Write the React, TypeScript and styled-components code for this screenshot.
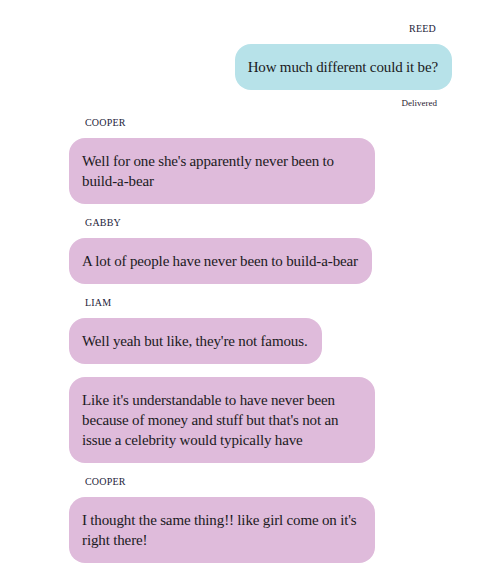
import React from "react";
import styled, { createGlobalStyle } from "styled-components";

const Global = createGlobalStyle`
  html, body { margin: 0; padding: 0; background: #ffffff; }
  body { font-family: "Liberation Serif", "DejaVu Serif", serif; color: #1b1a22; }
`;

const Thread = styled.div`
  display: flex;
  flex-direction: column;
  padding: 23px 28px 8px 69px;
`;

const Label = styled.div<{ $mine?: boolean }>`
  font-size: 10px;
  line-height: 12px;
  text-transform: uppercase;
  letter-spacing: 0.2px;
  color: #1d1c3a;
  margin: 0 16px 9px;
  align-self: ${(p) => (p.$mine ? "flex-end" : "flex-start")};
`;

const Bubble = styled.div<{ $mine?: boolean }>`
  box-sizing: border-box;
  max-width: 306px;
  padding: 13px 14px 13px 13px;
  border-radius: 16px;
  font-size: 15px;
  line-height: 20px;
  letter-spacing: -0.12px;
  word-spacing: -0.2px;
  background: ${(p) => (p.$mine ? "#b7e2e9" : "#dfbbdb")};
  align-self: ${(p) => (p.$mine ? "flex-end" : "flex-start")};
  margin-bottom: 13px;
`;

const Status = styled.div`
  align-self: flex-end;
  font-size: 9px;
  line-height: 11px;
  margin: -5px 15px 8px 0;
  color: #2a2230;
`;

type Msg = { who?: string; text: string; mine?: boolean; status?: string };

const messages: Msg[] = [
  { who: "Reed", text: "How much different could it be?", mine: true, status: "Delivered" },
  { who: "Cooper", text: "Well for one she's apparently never been to build-a-bear" },
  { who: "Gabby", text: "A lot of people have never been to build-a-bear" },
  { who: "Liam", text: "Well yeah but like, they're not famous." },
  { text: "Like it's understandable to have never been because of money and stuff but that's not an issue a celebrity would typically have" },
  { who: "Cooper", text: "I thought the same thing!! like girl come on it's right there!" },
];

export default function App() {
  return (
    <>
      <Global />
      <Thread>
        {messages.map((m, i) => (
          <React.Fragment key={i}>
            {m.who && <Label $mine={m.mine}>{m.who}</Label>}
            <Bubble $mine={m.mine}>{m.text}</Bubble>
            {m.status && <Status>{m.status}</Status>}
          </React.Fragment>
        ))}
      </Thread>
    </>
  );
}
